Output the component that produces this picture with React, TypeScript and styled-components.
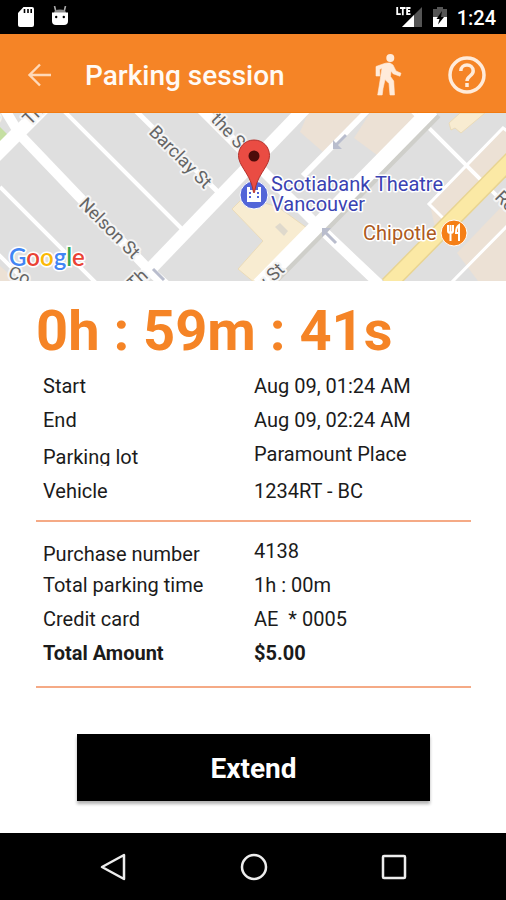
import React from "react";
import styled, { createGlobalStyle } from "styled-components";

const ORANGE = "#f58426";
const CREAM = "#ffebda";

const GlobalStyle = createGlobalStyle`
  *, *::before, *::after { box-sizing: border-box; }
  html, body, #root { height: 100%; }
  body { margin: 0; background: #fff; font-family: Roboto, "Liberation Sans", sans-serif; color: #1b1b1b; }
  button { font-family: inherit; border: 0; padding: 0; background: none; cursor: pointer; }
  svg { display: block; }
`;

const Screen = styled.div`
  min-height: 100vh;
  display: flex;
  flex-direction: column;
`;

const StatusBar = styled.div`
  height: 34px;
  padding: 0 10px 0 17px;
  display: flex;
  align-items: center;
  justify-content: space-between;
  background: #000;
  color: #fff;
`;

const StatusGroup = styled.div<{ $gap: number }>`
  display: flex;
  align-items: center;
  gap: ${(p) => p.$gap}px;
`;

const Clock = styled.time`
  font-size: 20px;
  line-height: 34px;
  font-weight: 500;
  padding-top: 2px;
`;

const AppBar = styled.header`
  height: 79px;
  padding: 3px 16px 0 24px;
  display: flex;
  align-items: center;
  background: ${ORANGE};
  border-bottom: 1px solid #f27a10;
`;

const Title = styled.h1`
  flex: 1;
  margin: 0 0 0 29px;
  padding-top: 2px;
  color: #fffaf5;
  font-size: 28px;
  line-height: 36px;
  font-weight: 500;
`;

const IconButton = styled.button<{ $size: number }>`
  width: ${(p) => p.$size}px;
  height: 48px;
  display: flex;
  align-items: center;
  justify-content: center;
  color: ${CREAM};
`;

const AppBarActions = styled.div`
  display: flex;
  gap: 32px;
`;

const MapStrip = styled.section`
  height: 168px;
  overflow: hidden;
  background: #dfdfdf;
  svg { width: 100%; height: 100%; }
`;

const Content = styled.main`
  flex: 1;
  padding: 0 35px 32px 36px;
  display: flex;
  flex-direction: column;
`;

const Timer = styled.div`
  margin-top: 16px;
  height: 72px;
  color: ${ORANGE};
  font-size: 56px;
  line-height: 68px;
  font-weight: 700;
  white-space: nowrap;
`;

const Details = styled.dl<{ $top: number; $bottom: number }>`
  margin: 0;
  padding: ${(p) => p.$top}px 0 ${(p) => p.$bottom}px 7px;
  border-bottom: 2px solid #f5aa86;
`;

const Row = styled.div<{ $strong?: boolean }>`
  height: 34px;
  display: grid;
  grid-template-columns: 211px 1fr;
  align-items: center;
  font-size: 20px;
  line-height: 24px;
  font-weight: ${(p) => (p.$strong ? 700 : 400)};
`;

const Term = styled.dt<{ $lowered?: boolean; $clipped?: boolean }>`
  padding-top: ${(p) => (p.$lowered ? 6 : 0)}px;
  line-height: ${(p) => (p.$clipped ? 18 : 24)}px;
  overflow: ${(p) => (p.$clipped ? "hidden" : "visible")};
`;

const Value = styled.dd`
  margin: 0;
  white-space: pre;
`;

const RowGap = styled.div`
  height: 3px;
`;

const ExtendButton = styled.button`
  && {
    margin: 46px 41px 0;
    height: 67px;
    padding-top: 2px;
    background: #000;
    color: #fff;
    font-size: 28px;
    line-height: 36px;
    font-weight: 700;
    box-shadow: 0 3px 3px rgba(0, 0, 0, 0.3);
  }
`;

const NavBar = styled.nav`
  height: 67px;
  padding: 0 97px 0 98px;
  display: flex;
  align-items: center;
  justify-content: space-between;
  background: #000;
  color: #ededed;
`;

const SdIcon = () => (
  <svg width="18" height="22" viewBox="0 0 18 22">
    <path d="M6.500 1H15q2 0 2 2v16q0 2-2 2H3q-2 0-2-2V7z" fill="#fff" />
    <path d="M7.500 3v4M11 3v4M14.200 3v4" stroke="#000" strokeWidth="1.600" />
  </svg>
);

const DroidIcon = () => (
  <svg width="18" height="22" viewBox="0 0 18 22">
    <path d="M3.500 0l1.500 6M14.500 0L13 6" stroke="#aaa" strokeWidth="1.600" />
    <path d="M3 7q0-3.500 6-3.500T15 7z" fill="#8c8c8c" />
    <path d="M1 6.500h16V15q0 4-4 4H5q-4 0-4-4z" fill="#fff" />
    <circle cx="5.200" cy="11" r="1.200" />
    <circle cx="12.800" cy="11" r="1.200" />
  </svg>
);

const SignalIcon = () => (
  <svg width="27" height="22" viewBox="0 0 27 22">
    <path d="M26 1v20H6z" fill="#555" />
    <path d="M18 9v12H6z" fill="#fff" />
    <path d="M0 0h15v10H0z" fill="#000" />
    <path
      d="M1.200 1v7.200h3.600M4 2h5.600M6.800 2v7.200M14.500 2h-3.400v6.200h3.400M11.100 5h3"
      fill="none"
      stroke="#fff"
      strokeWidth="1.800"
    />
  </svg>
);

const BatteryIcon = () => (
  <svg width="14" height="22" viewBox="0 0 14 22">
    <path d="M4 1h6v2h4v9H0V3h4z" fill="#555" />
    <path d="M0 11h14v10H0z" fill="#fff" />
    <path d="M9 5L3.500 13h3L5 18.500 11 11H8z" fill="#000" />
  </svg>
);

const BackIcon = () => (
  <svg width="32" height="32" viewBox="0 0 32 32" fill="none" stroke="#ffd9b8" strokeWidth="2.400">
    <path d="M27 16H6M16 5.500L5.500 16 16 26.500" />
  </svg>
);

const WalkIcon = () => (
  <svg width="28" height="44" viewBox="0 0 28 44">
    <circle cx="16.300" cy="5" r="4" fill={CREAM} />
    <path
      d="M9 11Q12 9.500 16 10l3 2 3 6 5 2.200-1 3-7-2.500-2-2.700-.5 5.500 3.200 4.500.8 14h-4.500l-1-11.500-4-4-2 9-.8 6.500H3.700l1.800-11 2.500-16-2.300 1.500.2 6.500H2V13.500z"
      fill={CREAM}
      stroke={CREAM}
      strokeWidth="0.600"
      strokeLinejoin="round"
    />
  </svg>
);

const HelpIcon = () => (
  <svg width="40" height="40" viewBox="0 0 40 40" fill="none" stroke={CREAM} strokeWidth="3.500">
    <circle cx="20" cy="20" r="17" />
    <path d="M13.800 16c0-8 12.400-8 12.400 0 0 5-6.200 5-6.200 10" />
    <path d="M20 28v4" />
  </svg>
);

const StreetMap = () => (
  <svg viewBox="0 0 506 168" preserveAspectRatio="xMidYMid slice" role="img" aria-label="Map of the parking location">
    <rect width="506" height="168" fill="#dfdfdf" />
    <g fill="#ece1d5">
      <path d="M308 0h55l-32 33-8 6-23-20zM370 0h44l3 9-36 36-27-20z" />
      <path d="M430 92l73-76 3 2v31l-70 70zM457 140l49-51v79h-28z" />
      <path d="M0 153l17 15H0z" />
    </g>
    <path d="M0 14l9 9-9 9z" fill="#c5dfa2" />
    <g fill="#f8ecd1" stroke="#eadbb9" strokeWidth="1">
      <path d="M232 96l12-12 34 10 29 21-52 55-17-14 25-28z" />
      <path d="M449 10l11-10h25l-24 20-6-5-4 2z" />
    </g>
    <path d="M275 114l5-4 8 8-4 5z" fill="#dfd9cc" />
    <g fill="none" stroke="#fff">
      <path d="M-5 43L45-7" strokeWidth="14" />
      <path d="M5-3L20 22 150 158l18 16" strokeWidth="10" />
      <path d="M63-3L182 116M0 74l96 96M-2 141l30 30" strokeWidth="4" />
      <path d="M135-3l86 85" strokeWidth="5" />
      <path d="M307-7L134 173" strokeWidth="13" />
      <path d="M200-5L321 116l58 55" strokeWidth="10" />
      <path d="M369-4L303 63" strokeWidth="6" />
      <path d="M410-4L510 96" strokeWidth="4" />
      <path d="M510 20l-7-5-74 76 14 14M509 111l-60 61" strokeWidth="3" />
    </g>
    <path d="M434-2L261 174" stroke="#cfcfca" strokeWidth="18" />
    <path d="M432-4L259 172" stroke="#fff" strokeWidth="15" />
    <path d="M512 46L388 172" stroke="#e8d492" strokeWidth="17" />
    <path d="M512 46L388 172" stroke="#fbe9a5" strokeWidth="14" />
    <g fill="none" stroke="#b9bdcd" strokeWidth="3">
      <path d="M346 22l-10 10M336 130l-12-12M153 156l11 11" />
    </g>
    <path d="M333 27v9h9zM322 124v-9h9z" fill="#b9bdcd" />
    <g
      fontSize="18"
      fill="#656565"
      stroke="#f4f4f4"
      strokeWidth="4"
      strokeLinejoin="round"
      paintOrder="stroke"
    >
      <text transform="translate(78 92) rotate(45)">Nelson St</text>
      <text transform="translate(148 20) rotate(45)">Barclay St</text>
      <text transform="translate(210 7) rotate(47)">the St</text>
      <text transform="translate(30 13) rotate(-45)">Thu</text>
      <text transform="translate(264 178) rotate(-43)">y St</text>
      <text transform="translate(494 85) rotate(45)">Robson</text>
      <text transform="translate(7 164) rotate(22)">Co</text>
      <text transform="translate(134 178) rotate(-43)">Th</text>
      <text transform="translate(-4 12) rotate(-60)">S</text>
    </g>
    <circle cx="254" cy="82" r="14" fill="#5265d8" stroke="#fff" strokeWidth="1" />
    <path d="M247 74h3v3h8v-3h3v15h-14z" fill="#fff" />
    <path d="M249 80h2M249 84h2M257 80h2M257 84h2" stroke="#5265d8" strokeWidth="2" />
    <g fontSize="20" stroke="#fff" strokeWidth="3" strokeLinejoin="round" paintOrder="stroke">
      <text x="271" y="78" fill="#3a42b2">Scotiabank Theatre</text>
      <text x="271" y="98" fill="#3a42b2">Vancouver</text>
      <text x="363" y="127" fill="#ad5a20">Chipotle</text>
    </g>
    <circle cx="454" cy="120" r="13" fill="#f57f17" stroke="#fff" strokeWidth="1" />
    <path
      d="M448 112v6q0 2 2.500 2t2.500-2v-6M450.500 112v16M459 128v-16q-3 2-3 8h3"
      fill="none"
      stroke="#fff"
      strokeWidth="2"
    />
    <path
      d="M254 27c-9 0-15.500 7-15.500 15.500 0 5 2.500 9 5.500 14 5 8 8 13 9.500 23h1c1.500-10 4.500-15 9.500-23 3-5 5.500-9 5.500-14C269.500 34 263 27 254 27z"
      fill="#ea4c43"
      stroke="#b3312b"
      strokeWidth="1"
    />
    <circle cx="254" cy="43" r="5.500" fill="#4d0c0a" />
    <text
      x="9"
      y="153"
      fontFamily="Lato, Roboto, sans-serif"
      fontSize="24"
      fontWeight="600"
      stroke="#fff"
      strokeWidth="3"
      paintOrder="stroke"
    >
      <tspan fill="#4285f4">G</tspan>
      <tspan fill="#ea4335">o</tspan>
      <tspan fill="#fbb905">o</tspan>
      <tspan fill="#4285f4">g</tspan>
      <tspan fill="#34a853">l</tspan>
      <tspan fill="#ea4335">e</tspan>
    </text>
  </svg>
);

export default function App() {
  return (
    <>
      <GlobalStyle />
      <Screen>
        <StatusBar>
          <StatusGroup $gap={16}>
            <SdIcon />
            <DroidIcon />
          </StatusGroup>
          <StatusGroup $gap={10}>
            <SignalIcon />
            <BatteryIcon />
            <Clock>1:24</Clock>
          </StatusGroup>
        </StatusBar>

        <AppBar>
          <IconButton $size={32} type="button" aria-label="Back">
            <BackIcon />
          </IconButton>
          <Title>Parking session</Title>
          <AppBarActions>
            <IconButton $size={48} type="button" aria-label="Walking directions">
              <WalkIcon />
            </IconButton>
            <IconButton $size={46} type="button" aria-label="Help">
              <HelpIcon />
            </IconButton>
          </AppBarActions>
        </AppBar>

        <MapStrip>
          <StreetMap />
        </MapStrip>

        <Content>
          <Timer role="timer">0h : 59m : 41s</Timer>
          <Details $top={0} $bottom={12}>
            <Row>
              <Term>Start</Term>
              <Value>Aug 09, 01:24 AM</Value>
            </Row>
            <Row>
              <Term>End</Term>
              <Value>Aug 09, 02:24 AM</Value>
            </Row>
            <Row>
              <Term $lowered $clipped>Parking lot</Term>
              <Value>Paramount Place</Value>
            </Row>
            <RowGap />
            <Row>
              <Term>Vehicle</Term>
              <Value>1234RT - BC</Value>
            </Row>
          </Details>
          <Details $top={12} $bottom={16}>
            <Row>
              <Term $lowered>Purchase number</Term>
              <Value>4138</Value>
            </Row>
            <Row>
              <Term>Total parking time</Term>
              <Value>1h : 00m</Value>
            </Row>
            <Row>
              <Term>Credit card</Term>
              <Value>{"AE  * 0005"}</Value>
            </Row>
            <Row $strong>
              <Term>Total Amount</Term>
              <Value>$5.00</Value>
            </Row>
          </Details>
          <ExtendButton type="button">Extend</ExtendButton>
        </Content>

        <NavBar>
          <IconButton $size={30} type="button" aria-label="Back">
            <svg width="30" height="30" viewBox="0 0 30 30" fill="none" stroke="#ededed" strokeWidth="2.500" strokeLinejoin="round">
              <path d="M26 3v24L4 15z" />
            </svg>
          </IconButton>
          <IconButton $size={30} type="button" aria-label="Home">
            <svg width="30" height="30" viewBox="0 0 30 30" fill="none" stroke="#ededed" strokeWidth="2.500">
              <circle cx="15" cy="15" r="12" />
            </svg>
          </IconButton>
          <IconButton $size={30} type="button" aria-label="Recent apps">
            <svg width="30" height="30" viewBox="0 0 30 30" fill="none" stroke="#ededed" strokeWidth="2.500">
              <rect x="4" y="4" width="22" height="22" rx="1" />
            </svg>
          </IconButton>
        </NavBar>
      </Screen>
    </>
  );
}
